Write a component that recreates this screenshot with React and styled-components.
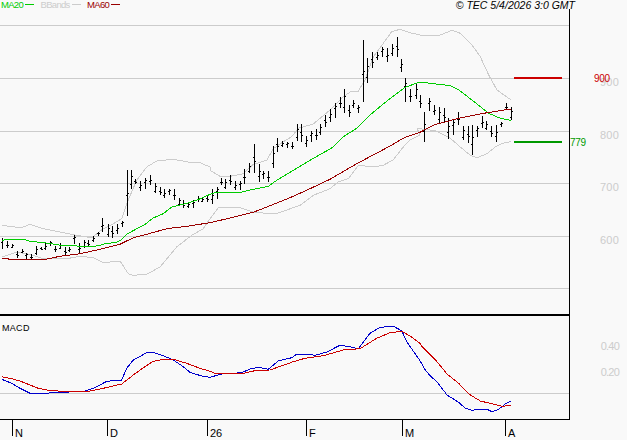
import React from "react";
import styled, { createGlobalStyle } from "styled-components";

const GlobalStyle = createGlobalStyle`
  html, body {
    margin: 0;
    background: #f9f9f9;
  }
`;

const Page = styled.div`
  display: grid;
  grid-template-columns: 570px 57px;
  grid-template-rows: 9px 305px 106px 20px;
  width: 627px;
  height: 440px;
  overflow: hidden;
  background: #f9f9f9;
  font-family: "Liberation Sans", Arial, sans-serif;
`;

const Header = styled.div`
  grid-column: 1 / 3;
  display: flex;
  justify-content: space-between;
  padding: 0 52px 0 1px;
`;

const Legend = styled.div`
  display: flex;
  gap: 6.5px;
`;

const LegendItem = styled.div`
  display: flex;
  align-items: center;
  gap: 2px;
  height: 9px;
  font-size: 9.5px;
  letter-spacing: -0.7px;
  color: ${(p) => p.$color};
`;

const LegendDash = styled.span`
  width: 9px;
  height: 1px;
  background: ${(p) => p.$color};
`;

const Stamp = styled.div`
  font-size: 10.5px;
  line-height: 10px;
  font-style: italic;
  color: #000;
  white-space: nowrap;
`;

const Panel = styled.div`
  position: relative;
  border-right: 1px solid #000;
  border-top: ${(p) => (p.$macd ? "2px solid #000" : "none")};
  border-bottom: ${(p) => (p.$macd ? "1px solid #000" : "none")};
`;

const PlotSvg = styled.svg`
  display: block;
  width: 569px;
  height: 100%;
`;

const PanelTitle = styled.div`
  position: absolute;
  left: 2px;
  top: 7px;
  font-size: 9px;
  letter-spacing: 0.3px;
  color: #000;
`;

const Scale = styled.div`
  position: relative;
  padding-top: ${(p) => p.$offset}px;
  display: flex;
  flex-direction: column;
  align-items: flex-end;
  padding-right: 8px;
`;

const ScaleValue = styled.div`
  height: ${(p) => p.$step}px;
  font-size: 11px;
  line-height: 11px;
  letter-spacing: ${(p) => (p.$tight ? "-0.8px" : "0.2px")};
  color: #cccccc;
`;

const LevelLabel = styled.div`
  position: absolute;
  left: ${(p) => p.$left}px;
  top: ${(p) => p.$top}px;
  font-size: 10px;
  line-height: 11px;
  letter-spacing: -0.3px;
  color: ${(p) => p.$color};
`;

const TimeAxis = styled.div`
  display: flex;
  padding-left: 12px;
`;

const TimeMark = styled.div`
  flex: none;
  box-sizing: border-box;
  width: ${(p) => p.$width}px;
  height: 16px;
  border-left: 1px solid #000;
  padding: 8px 0 0 2px;
  font-size: 11px;
  line-height: 11px;
  color: #000;
`;

// the points were read off 3x crops, so each stretch keeps its crop origin
const crop = (ox, oy, pts) => pts.map(([x, y]) => [ox + x / 3, oy + y / 3]);
const toPath = (pts) => pts.map(([x, y]) => `${x.toFixed(1)},${y.toFixed(1)}`).join(" ");

const MA20 = [
  ...crop(0, 147, [[5,280],[20,278],[70,276],[90,283],[130,287],[160,291],[190,296],[230,297],[265,300],[295,296],[320,289],[345,287],[360,281],[380,262],[405,248],[435,232],[460,213],[490,200],[515,180],[550,172],[590,160],[630,142]]),
  ...crop(210, 147, [[20,135],[95,135],[125,128],[175,118],[200,100],[250,70],[300,40],[365,3]]),
  ...crop(210, 0, [[400,410],[440,385],[480,345],[520,312],[545,292],[585,262],[630,246]]),
  ...crop(417, 0, [[40,250],[100,257],[125,270],[165,300],[215,340],[250,355],[281,361]]),
];

const MA60 = [
  ...crop(0, 147, [[5,335],[45,337],[90,337],[130,338],[180,328],[240,320],[300,307],[360,292],[400,272],[440,262],[500,245],[560,238],[630,227]]),
  ...crop(210, 147, [[60,213],[130,196],[170,180],[240,152],[300,125],[360,97],[440,50],[535,0]]),
  ...crop(210, 0, [[585,412],[630,397]]),
  ...crop(417, 0, [[50,375],[125,355],[200,340],[281,327]]),
];

const BB_UPPER = [
  ...crop(0, 147, [[5,235],[45,240],[70,240],[90,232],[130,245],[180,255],[230,265],[275,272],[310,245],[340,230],[365,215],[380,170],[410,100],[440,60],[470,42],[520,37],[565,45],[600,47],[630,60]]),
  ...crop(210, 147, [[0,70],[30,88],[60,88],[100,80],[130,52],[170,40],[190,5]]),
  ...crop(210, 0, [[220,425],[245,410],[265,385],[310,372],[360,330],[400,290],[425,273],[445,273],[465,240],[490,170],[520,130],[545,95],[570,88],[600,98],[630,105]]),
  ...crop(417, 0, [[70,105],[105,91],[130,100],[165,135],[190,170],[215,225],[240,270],[281,299]]),
];

const BB_LOWER = [
  ...crop(0, 147, [[5,330],[50,315],[90,322],[130,335],[200,335],[240,328],[280,332],[310,347],[360,342],[385,380],[400,385],[440,382],[480,360],[530,300],[575,265],[610,245],[630,215]]),
  ...crop(210, 147, [[25,182],[90,182],[130,195],[160,198],[205,198],[270,175],[310,145],[360,125],[385,105],[415,95],[445,55],[490,60],[520,55],[550,38],[580,0]]),
  ...crop(210, 0, [[600,420],[630,405]]),
  ...crop(417, 0, [[0,385],[55,392],[100,415],[130,441]]),
  ...crop(417, 147, [[160,25],[180,32],[210,20],[235,0]]),
  ...crop(417, 0, [[255,430],[281,425]]),
];

const MACD_LINE = [
  ...crop(0, 300, [[5,238],[35,250],[60,265],[90,280],[145,280],[150,277],[210,276],[255,273],[285,263],[320,244],[365,240],[380,205],[400,180],[440,158],[460,157],[490,167],[520,180],[550,200],[570,217],[605,228],[630,232]]),
  ...crop(210, 300, [[35,222],[95,218],[120,207],[145,202],[175,208],[205,183],[245,173],[260,163],[295,163],[315,166],[350,156],[390,136],[420,140],[445,146],[480,100],[510,82],[550,79],[575,92],[590,125],[630,182]]),
  ...crop(417, 300, [[25,210],[40,228],[60,245],[90,285],[125,307],[145,325],[165,331],[185,328],[210,328],[225,335],[245,328],[265,312],[281,304]]),
];

const SIGNAL_LINE = [
  ...crop(0, 300, [[5,230],[30,235],[60,243],[90,255],[115,265],[145,271],[185,274],[265,274],[310,265],[365,252],[400,225],[430,203],[460,184],[490,178],[520,178],[560,190],[600,205],[630,214]]),
  ...crop(210, 300, [[15,220],[100,220],[140,211],[180,210],[250,185],[285,175],[340,167],[400,150],[450,146],[500,115],[540,98],[575,94],[600,108],[630,130]]),
  ...crop(417, 300, [[15,140],[60,185],[90,222],[125,250],[155,282],[190,303],[240,315],[255,319],[281,316]]),
];

// x, high, low
const BARS = [
  [2,238,249],[7,241,248],[12,244,248],[17,251,258],[22,249,253],[26,253,259],[31,254,260],[36,246,255],[41,247,250],[45,243,250],
  [50,241,246],[55,246,252],[60,243,249],[65,247,255],[69,247,252],[74,235,244],[79,243,253],[84,240,248],[88,240,247],[93,236,242],
  [98,232,236],[102,218,232],[108,224,237],[112,226,238],[117,224,234],[122,221,227],[127,170,216],[131,170,189],[135,179,184],[140,181,191],
  [145,178,189],[150,175,185],[155,183,193],[160,187,195],[164,189,198],[169,189,195],[174,189,200],[179,198,206],[183,200,208],[188,202,208],
  [193,200,208],[198,196,202],[202,197,202],[207,195,202],[212,189,204],[217,187,199],[221,178,185],[225,179,189],[230,175,185],[235,181,190],
  [240,181,190],[244,169,184],[249,163,173],[254,144,173],[259,164,182],[263,171,179],[268,171,182],[273,146,168],[277,138,152],[282,141,147],
  [287,142,148],[292,142,149],[297,124,141],[301,124,142],[306,136,147],[311,131,142],[316,129,140],[320,124,135],[325,115,127],[330,109,122],
  [335,103,118],[340,97,108],[344,89,113],[349,105,117],[353,100,108],[358,105,113],[363,40,102],[367,58,83],[372,52,68],[377,52,60],
  [382,47,57],[387,48,62],[392,44,56],[397,37,57],[401,59,72],[405,78,102],[410,89,102],[416,84,99],[420,95,108],[424,112,142],
  [429,98,111],[434,105,115],[439,107,123],[444,108,123],[448,118,139],[453,119,135],[458,112,125],[463,126,140],[468,126,143],[472,125,155],
  [477,126,137],[482,116,128],[486,121,130],[491,126,137],[496,125,142],[501,122,127],[506,103,110],[511,107,120],
];

const PRICE_GRID = [25, 78, 131, 183, 236, 288];
const MONTHS = [
  { label: "N", width: 95 },
  { label: "D", width: 100 },
  { label: "26", width: 99 },
  { label: "F", width: 96 },
  { label: "M", width: 103 },
  { label: "A", width: 40 },
];

function Bar({ x, high, low, index }) {
  const span = low - high;
  // open and close ticks vary a little from bar to bar
  const open = high + Math.round(span * (0.35 + ((index * 7) % 5) / 10));
  const close = high + Math.round(span * (0.2 + ((index * 3) % 5) / 10));
  return (
    <g stroke="#000" strokeWidth="1">
      <line x1={x + 0.5} x2={x + 0.5} y1={high} y2={low} />
      <line x1={x - 1} x2={x} y1={open + 0.5} y2={open + 0.5} />
      <line x1={x + 1} x2={x + 2} y1={close + 0.5} y2={close + 0.5} />
    </g>
  );
}

function Curve({ points, color }) {
  return <polyline points={toPath(points)} fill="none" stroke={color} strokeWidth="1" />;
}

export default function App() {
  return (
    <>
      <GlobalStyle />
      <Page>
        <Header>
          <Legend>
            <LegendItem $color="#00cc00">
              MA20 <LegendDash $color="#00cc00" />
            </LegendItem>
            <LegendItem $color="#cccccc">
              BBands <LegendDash $color="#cccccc" />
            </LegendItem>
            <LegendItem $color="#990000">
              MA60 <LegendDash $color="#990000" />
            </LegendItem>
          </Legend>
          <Stamp>© TEC 5/4/2026 3:0 GMT</Stamp>
        </Header>

        <Panel>
          <PlotSvg viewBox="0 9 569 305" shapeRendering="crispEdges">
            {PRICE_GRID.map((y) => (
              <line key={y} x1="0" x2="569" y1={y + 0.5} y2={y + 0.5} stroke="#cccccc" />
            ))}
            <Curve points={BB_UPPER} color="#cccccc" />
            <Curve points={BB_LOWER} color="#cccccc" />
            {BARS.map(([x, high, low], i) => (
              <Bar key={x} x={x} high={high} low={low} index={i} />
            ))}
            <Curve points={MA20} color="#00cc00" />
            <Curve points={MA60} color="#990000" />
            <rect x="514" y="77" width="48" height="2" fill="#cc0000" />
            <rect x="514" y="141" width="48" height="2" fill="#009900" />
          </PlotSvg>
        </Panel>
        <Scale $offset={68}>
          <ScaleValue $step={52.5}>900</ScaleValue>
          <ScaleValue $step={52.5}>800</ScaleValue>
          <ScaleValue $step={52.5}>700</ScaleValue>
          <ScaleValue $step={52.5}>600</ScaleValue>
          <LevelLabel $left={24} $top={64} $color="#cc0000">900</LevelLabel>
          <LevelLabel $left={0} $top={128} $color="#009900">779</LevelLabel>
        </Scale>

        <Panel $macd>
          <PlotSvg viewBox="0 316 569 103" shapeRendering="crispEdges">
            <line x1="0" x2="569" y1="393.5" y2="393.5" stroke="#cccccc" />
            <Curve points={MACD_LINE} color="#0000cc" />
            <Curve points={SIGNAL_LINE} color="#cc0000" />
          </PlotSvg>
          <PanelTitle>MACD</PanelTitle>
        </Panel>
        <Scale $offset={27}>
          <ScaleValue $step={26} $tight>0.40</ScaleValue>
          <ScaleValue $step={26} $tight>0.20</ScaleValue>
        </Scale>

        <TimeAxis>
          {MONTHS.map((m) => (
            <TimeMark key={m.label} $width={m.width}>{m.label}</TimeMark>
          ))}
        </TimeAxis>
      </Page>
    </>
  );
}
